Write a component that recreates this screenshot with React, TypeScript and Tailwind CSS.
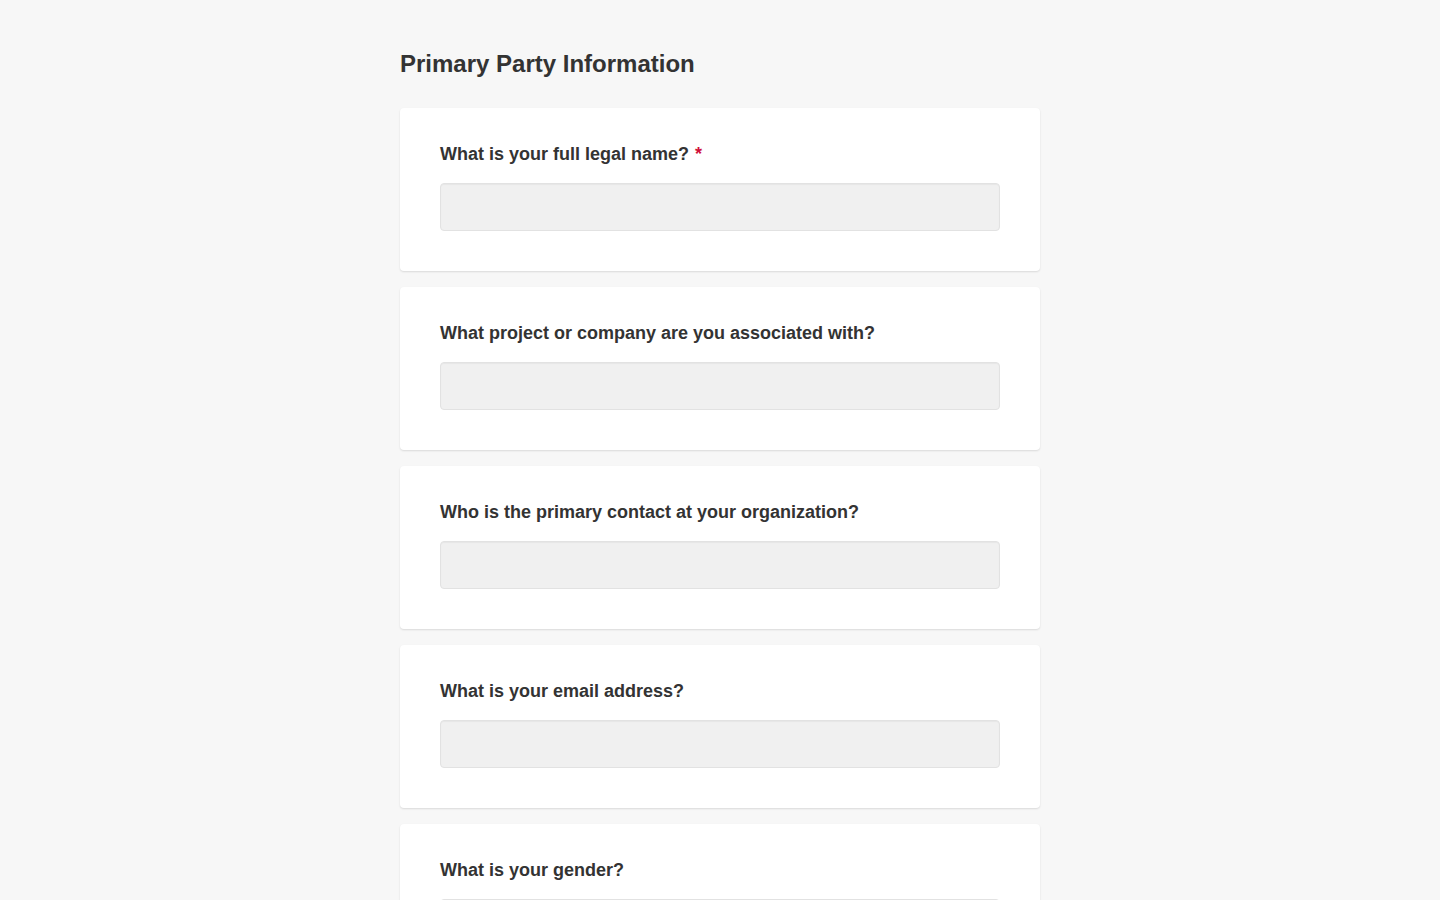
import React from 'react';

interface Question {
  label: string;
  required?: boolean;
}

const questions: Question[] = [
  { label: 'What is your full legal name?', required: true },
  { label: 'What project or company are you associated with?' },
  { label: 'Who is the primary contact at your organization?' },
  { label: 'What is your email address?' },
  { label: 'What is your gender?' },
];

const QuestionCard: React.FC<{ q: Question }> = ({ q }) => (
  <div className="bg-white rounded-[4px] shadow-[0_1px_2px_rgba(0,0,0,0.12)] px-10 pt-[33px] pb-10">
    <label className="block text-[18px] leading-[27px] font-bold text-[#333333] mb-[15px]">
      {q.label}
      {q.required && <span className="text-[#d0103a] ml-[6px]">*</span>}
    </label>
    <input
      type="text"
      className="block w-full h-12 bg-[#f0f0f0] border border-[#e2e2e2] rounded-[4px] px-3 outline-none shadow-[inset_0_1px_1px_rgba(0,0,0,0.04)]"
    />
  </div>
);

export default function App() {
  return (
    <div
      className="min-h-screen bg-[#f7f7f7]"
      style={{ fontFamily: '"Liberation Sans", Arial, sans-serif' }}
    >
      <div className="w-[640px] mx-auto pt-[46px] pb-10">
        <h1 className="text-[24px] leading-[36px] font-bold text-[#333333] mb-[26px]">
          Primary Party Information
        </h1>
        <div className="flex flex-col gap-4">
          {questions.map((q) => (
            <QuestionCard key={q.label} q={q} />
          ))}
        </div>
      </div>
    </div>
  );
}
